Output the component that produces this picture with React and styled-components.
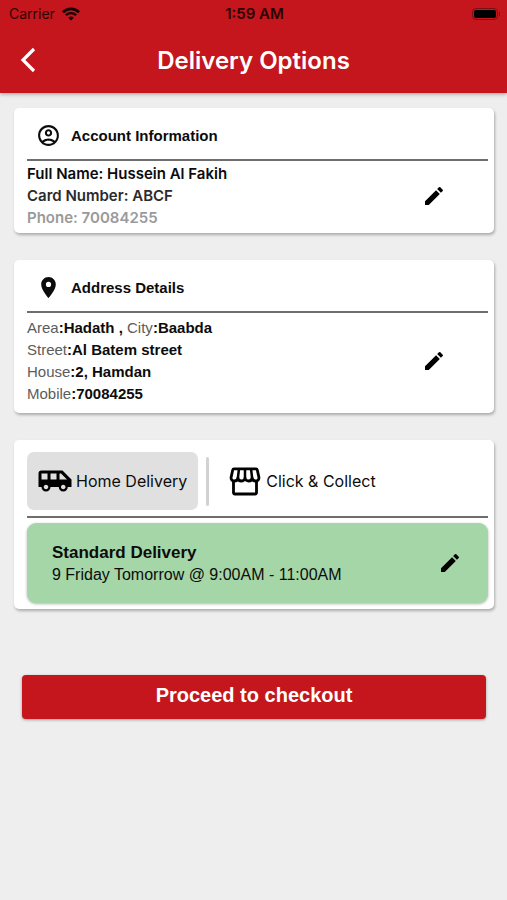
import React from "react";
import styled, { createGlobalStyle } from "styled-components";
import {
  MdAirportShuttle,
  MdEdit,
  MdLocationOn,
  MdOutlineAccountCircle,
} from "react-icons/md";

const addressLines = [
  [
    ["Area", "Hadath , "],
    ["City", "Baabda"],
  ],
  [["Street", "Al Batem street"]],
  [["House", "2, Hamdan"]],
  [["Mobile", "70084255"]],
];

const WifiIcon = () => (
  <svg width="18" height="14" viewBox="0 0 18 14" fill="none">
    <path d="M1 5.2a11.4 11.4 0 0 1 16 0" stroke="#160203" strokeWidth="2.6" />
    <path d="M3.9 8.2a7.2 7.2 0 0 1 10.2 0" stroke="#160203" strokeWidth="2.4" />
    <path d="M9 13.6 6.2 10.8a4 4 0 0 1 5.6 0z" fill="#160203" />
  </svg>
);

const BackIcon = () => (
  <svg width="16" height="26" viewBox="0 0 16 26" fill="none">
    <path d="M14 2 3 13l11 11" stroke="#fff" strokeWidth="3.2" />
  </svg>
);

const StoreIcon = () => (
  <svg
    width="36"
    height="36"
    viewBox="0 0 36 36"
    fill="none"
    stroke="#000"
    strokeWidth="2.8"
    strokeLinejoin="round"
  >
    <path d="M6.5 17v12.6q0 1.4 1.4 1.4h20.2q1.4 0 1.4-1.4V17" />
    <path d="M7 5.8h22q1 0 1.3 1.2l1.6 7.4c.3 2-1.2 3.6-3.2 3.6-2 0-3.4-1.2-3.6-3-.2 1.8-1.6 3-3.4 3S18.1 16.700 18 15c-.1 1.700-1.800 3-3.700 3s-3.200-1.200-3.400-3c-.2 1.800-1.600 3-3.600 3s-3.500-1.600-3.200-3.600L5.700 7Q6 5.800 7 5.800z" />
    <path d="M11.900 6.500l-1 8.500M18 6.500V15M24.100 6.500l1 8.500" strokeWidth="2.500" />
  </svg>
);

const App = () => {
  return (
    <>
      <GlobalStyle />
      <Header>
        <StatusBar>
          <Carrier>
            Carrier
            <WifiIcon />
          </Carrier>
          <Clock>1:59 AM</Clock>
          <BatterySlot>
            <Battery />
            <BatteryTip />
          </BatterySlot>
        </StatusBar>
        <TitleBar>
          <BackButton type="button" aria-label="Back">
            <BackIcon />
          </BackButton>
          <Title>Delivery Options</Title>
        </TitleBar>
      </Header>

      <Main>
        <Card>
          <CardHeader>
            <MdOutlineAccountCircle size={25} />
            <CardTitle>Account Information</CardTitle>
          </CardHeader>
          <CardBody $compact>
            <AccountLines>
              <AccountLine>Full Name: Hussein Al Fakih</AccountLine>
              <AccountLine $color="#2b2b2b">Card Number: ABCF</AccountLine>
              <AccountLine $color="#9a9a9a">Phone: 70084255</AccountLine>
            </AccountLines>
            <EditButton type="button" aria-label="Edit account">
              <MdEdit size={24} />
            </EditButton>
          </CardBody>
        </Card>

        <Card>
          <CardHeader>
            <MdLocationOn size={25} />
            <CardTitle>Address Details</CardTitle>
          </CardHeader>
          <CardBody>
            <div>
              {addressLines.map((line) => (
                <AddressLine key={line[0][0]}>
                  {line.map(([label, value]) => (
                    <React.Fragment key={label}>
                      {label}
                      <b>:{value}</b>
                    </React.Fragment>
                  ))}
                </AddressLine>
              ))}
            </div>
            <EditButton type="button" aria-label="Edit address">
              <MdEdit size={24} />
            </EditButton>
          </CardBody>
        </Card>

        <Card>
          <Methods>
            <MethodButton type="button" $active>
              <MdAirportShuttle size={36} color="#000" />
              Home Delivery
            </MethodButton>
            <Divider />
            <MethodButton type="button">
              <StoreIcon />
              Click &amp; Collect
            </MethodButton>
          </Methods>
          <Slot>
            <div>
              <SlotTitle>Standard Delivery</SlotTitle>
              <SlotTime>9 Friday Tomorrow @ 9:00AM - 11:00AM</SlotTime>
            </div>
            <EditButton type="button" aria-label="Edit delivery time">
              <MdEdit size={24} />
            </EditButton>
          </Slot>
        </Card>

        <Checkout type="button">Proceed to checkout</Checkout>
      </Main>
    </>
  );
};

const GlobalStyle = createGlobalStyle`
  * {
    box-sizing: border-box;
  }
  body {
    margin: 0;
    background: #eeeeee;
    color: #0c0c0c;
    font-family: "Liberation Sans", Arial, sans-serif;
  }
  h1, h2, h3, p {
    margin: 0;
  }
  button {
    border: none;
    padding: 0;
    background: none;
    color: inherit;
    font-family: inherit;
    cursor: pointer;
  }
  svg {
    flex-shrink: 0;
  }
`;

const Header = styled.header`
  background: #c4161c;
  box-shadow: 0 1px 4px rgba(0, 0, 0, 0.35);
  font-family: Inter, sans-serif;
`;

const StatusBar = styled.div`
  display: grid;
  grid-template-columns: 1fr auto 1fr;
  align-items: center;
  height: 27px;
  padding: 0 7px 0 9px;
  color: #2a0405;
  font-size: 14px;
`;

const Carrier = styled.div`
  display: flex;
  align-items: center;
  gap: 7px;
`;

const Clock = styled.div`
  font-size: 15px;
  font-weight: 600;
`;

const BatterySlot = styled.div`
  display: flex;
  align-items: center;
  justify-content: flex-end;
  gap: 1px;
`;

const Battery = styled.div`
  width: 26px;
  height: 12px;
  border: 1px solid #7d0e12;
  border-radius: 4px;
  padding: 1px;
  &::before {
    content: "";
    display: block;
    height: 100%;
    border-radius: 2px;
    background: #000;
  }
`;

const BatteryTip = styled.div`
  width: 1px;
  height: 4px;
  background: #7d0e12;
`;

const TitleBar = styled.div`
  display: grid;
  grid-template-columns: 56px 1fr 56px;
  align-items: center;
  height: 66px;
`;

const BackButton = styled.button`
  display: flex;
  align-items: center;
  justify-content: center;
  height: 48px;
`;

const Title = styled.h1`
  color: #fff;
  font-size: 24px;
  font-weight: 600;
  text-align: center;
`;

const Main = styled.main`
  display: flex;
  flex-direction: column;
  gap: 27px;
  padding: 15px 13px 24px 14px;
`;

const Card = styled.section`
  padding: 0 6px 0 13px;
  background: #fff;
  border-radius: 5px;
  box-shadow: 1px 2px 3px rgba(0, 0, 0, 0.28);
`;

const CardHeader = styled.div`
  display: flex;
  align-items: center;
  gap: 10px;
  height: 53px;
  padding: 4px 0 0 9px;
  border-bottom: 2px solid #6e6e6e;
`;

const CardTitle = styled.h2`
  font-size: 15px;
  font-weight: 700;
`;

const CardBody = styled.div`
  display: flex;
  align-items: center;
  justify-content: space-between;
  padding: ${({ $compact }) => ($compact ? "2px 42px 4px 0" : "4px 42px 8px 0")};
`;

const AccountLines = styled.div`
  font-family: Inter, sans-serif;
`;

const AccountLine = styled.p`
  color: ${({ $color }) => $color || "#0c0c0c"};
  font-size: 15px;
  font-weight: 600;
  line-height: 22px;
`;

const AddressLine = styled.p`
  color: #5c5c5c;
  font-size: 15px;
  line-height: 22px;
  white-space: pre-wrap;
  b {
    color: #0c0c0c;
  }
`;

const EditButton = styled.button`
  display: flex;
  color: #000;
`;

const Methods = styled.div`
  display: flex;
  align-items: center;
  gap: 8px;
  padding: 12px 0 6px;
  border-bottom: 2px solid #6e6e6e;
`;

const MethodButton = styled.button`
  display: flex;
  align-items: center;
  gap: 3px;
  height: 58px;
  padding: 0 11px 0 10px;
  border-radius: 7px;
  background: ${({ $active }) => ($active ? "#e0e0e0" : "transparent")};
  font-family: Inter, sans-serif;
  font-size: 16px;
`;

const Divider = styled.div`
  width: 3px;
  height: 49px;
  border-radius: 2px;
  background: #d2d2d2;
`;

const Slot = styled.div`
  display: flex;
  align-items: center;
  justify-content: space-between;
  height: 80px;
  margin: 5px 0 6px;
  padding: 0 26px 0 25px;
  border-radius: 9px;
  background: #a5d6a7;
  box-shadow: 0 1px 3px rgba(0, 0, 0, 0.3);
`;

const SlotTitle = styled.h3`
  font-size: 17px;
  line-height: 23px;
`;

const SlotTime = styled.p`
  font-size: 16px;
  line-height: 22px;
`;

const Checkout = styled.button`
  height: 44px;
  margin: 39px 8px 0;
  padding-bottom: 4px;
  border-radius: 4px;
  background: #c4161c;
  box-shadow: 0 1px 3px rgba(0, 0, 0, 0.35);
  color: #fff;
  font-size: 20px;
  font-weight: 700;
`;

export default App;
